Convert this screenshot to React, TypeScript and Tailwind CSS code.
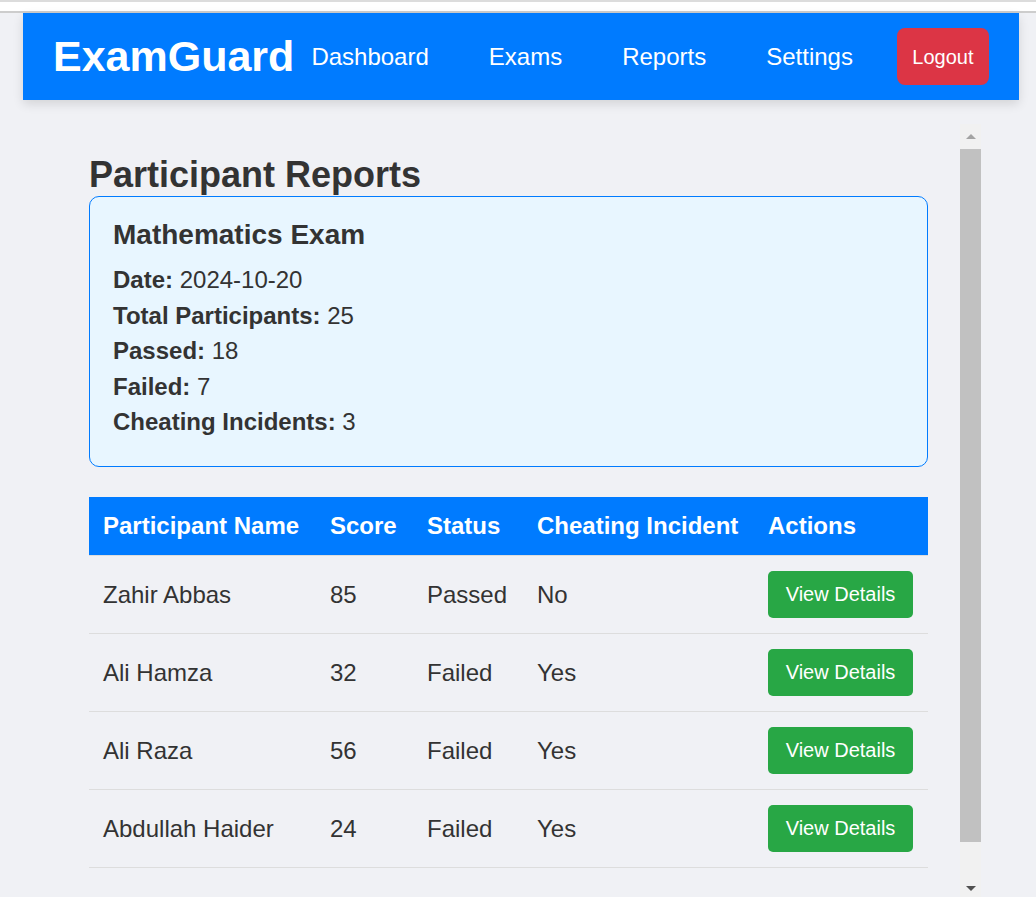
const participants = [
  { name: "Zahir Abbas", score: 85, status: "Passed", cheating: "No" },
  { name: "Ali Hamza", score: 32, status: "Failed", cheating: "Yes" },
  { name: "Ali Raza", score: 56, status: "Failed", cheating: "Yes" },
  { name: "Abdullah Haider", score: 24, status: "Failed", cheating: "Yes" },
];

const summary = [
  { label: "Date:", value: "2024-10-20" },
  { label: "Total Participants:", value: "25" },
  { label: "Passed:", value: "18" },
  { label: "Failed:", value: "7" },
  { label: "Cheating Incidents:", value: "3" },
];

function Navbar() {
  return (
    <nav className="ml-[23px] flex h-[87px] w-[996px] items-center bg-[#007bff] pl-[30px] pr-[30px] text-white shadow-[0_4px_10px_rgba(0,0,0,0.12)]">
      <h1 className="text-[43px] font-bold leading-none">ExamGuard</h1>
      <ul className="ml-[17px] flex gap-[60px] text-[24px]">
        <li>Dashboard</li>
        <li>Exams</li>
        <li>Reports</li>
        <li>Settings</li>
      </ul>
      <button className="ml-[44px] h-[57px] w-[92px] rounded-[8px] bg-[#dc3545] text-[20px] text-white">
        Logout
      </button>
    </nav>
  );
}

function Scrollbar() {
  return (
    <div className="flex w-[21px] flex-col bg-[#f1f1f1]">
      <div className="flex h-[25px] items-center justify-center">
        <div className="h-0 w-0 border-x-[5px] border-b-[5px] border-x-transparent border-b-[#a3a3a3]" />
      </div>
      <div className="h-[693px] bg-[#c1c1c1]" />
      <div className="flex-1" />
      <div className="flex h-[25px] items-center justify-center">
        <div className="h-0 w-0 border-x-[5px] border-t-[5px] border-x-transparent border-t-[#505050]" />
      </div>
    </div>
  );
}

export default function App() {
  return (
    <div className="h-[897px] overflow-hidden bg-[#f0f1f5] font-['Liberation_Sans',Arial,sans-serif] text-[#333]">
      <div className="h-[2px] bg-[#dcdcdc]" />
      <div className="h-[9px] bg-white" />
      <div className="h-[2px] bg-[#cdcdcd]" />
      <Navbar />

      <div className="mt-[24px] flex h-[777px] w-[981px]">
        <div className="flex-1 overflow-hidden pl-[89px] pr-[32px] pt-[30px]">
          <h2 className="text-[36px] font-bold leading-[41px]">Participant Reports</h2>

          <div className="mt-[1px] rounded-[10px] border border-[#007bff] bg-[#e8f6ff] px-[23px] pb-[26px] pt-[22px]">
            <h3 className="text-[28px] font-bold leading-[32px]">Mathematics Exam</h3>
            <div className="mt-[11px] text-[24px]">
              {summary.map((s) => (
                <p key={s.label} className="leading-[35.5px]">
                  <span className="font-bold">{s.label}</span> {s.value}
                </p>
              ))}
            </div>
          </div>

          <table className="mt-[30px] w-full table-fixed border-collapse text-left text-[24px]">
            <thead>
              <tr className="border-b border-[#dddddd] bg-[#007bff] text-white">
                <th className="w-[227px] px-[14px] py-[15px] font-bold leading-[28px]">Participant Name</th>
                <th className="w-[97px] px-[14px] py-[15px] font-bold leading-[28px]">Score</th>
                <th className="w-[110px] px-[14px] py-[15px] font-bold leading-[28px]">Status</th>
                <th className="w-[231px] px-[14px] py-[15px] font-bold leading-[28px]">Cheating Incident</th>
                <th className="px-[14px] py-[15px] font-bold leading-[28px]">Actions</th>
              </tr>
            </thead>
            <tbody>
              {participants.map((p) => (
                <tr key={p.name} className="border-b border-[#dddddd]">
                  <td className="px-[14px] py-[15px] leading-[27px]">{p.name}</td>
                  <td className="px-[14px] py-[15px] leading-[27px]">{p.score}</td>
                  <td className="px-[14px] py-[15px] leading-[27px]">{p.status}</td>
                  <td className="px-[14px] py-[15px] leading-[27px]">{p.cheating}</td>
                  <td className="px-[14px] py-[15px]">
                    <button className="h-[47px] w-[145px] rounded-[5px] bg-[#28a745] text-[20px] text-white">
                      View Details
                    </button>
                  </td>
                </tr>
              ))}
            </tbody>
          </table>
        </div>
        <Scrollbar />
      </div>
    </div>
  );
}
